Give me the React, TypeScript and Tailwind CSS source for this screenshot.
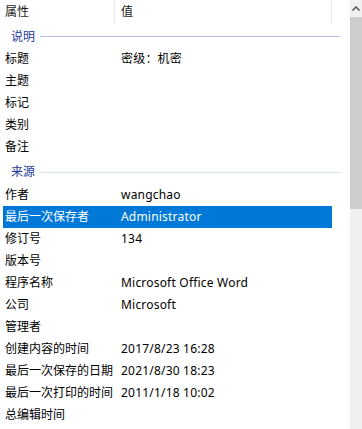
const font = { fontFamily: "'Noto Sans', 'Noto Sans CJK SC', sans-serif" }

type Row = { label: string; value?: string; selected?: boolean }

const desc: Row[] = [
  { label: '标题', value: '密级：机密' },
  { label: '主题' },
  { label: '标记' },
  { label: '类别' },
  { label: '备注' },
]

const origin: Row[] = [
  { label: '作者', value: 'wangchao' },
  { label: '最后一次保存者', value: 'Administrator', selected: true },
  { label: '修订号', value: '134' },
  { label: '版本号' },
  { label: '程序名称', value: 'Microsoft Office Word' },
  { label: '公司', value: 'Microsoft' },
  { label: '管理者' },
  { label: '创建内容的时间', value: '2017/8/23 16:28' },
  { label: '最后一次保存的日期', value: '2021/8/30 18:23' },
  { label: '最后一次打印的时间', value: '2011/1/18 10:02' },
  { label: '总编辑时间' },
]

function PropRow({ row }: { row: Row }) {
  return (
    <div
      className={`flex h-[22px] items-center ml-[3px] w-[329px] ${row.selected ? 'bg-[#0078d7] text-white' : 'text-black'}`}
    >
      <div className="w-[118px] pl-[2px] whitespace-nowrap">{row.label}</div>
      <div className="whitespace-nowrap tracking-[0.2px]">{row.value}</div>
    </div>
  )
}

function Group({ title, faded, className }: { title: string; faded?: boolean; className: string }) {
  return (
    <div className={`flex items-center ${className}`}>
      <span className="pl-[11px] pr-[5px] text-[#1c3a9c]">{title}</span>
      <div className={`h-px w-[300px] ${faded ? 'bg-[#dbe3f1]' : 'bg-[#b3c0e6]'}`} />
    </div>
  )
}

export default function App() {
  return (
    <div className="flex h-[429px] w-[362px] bg-white text-[12px] overflow-hidden" style={font}>
      <div className="flex-1">
        <div className="flex h-[24px]">
          <div className="w-[115px] border-r border-[#e5e5e5] pl-[5px] pt-[3px] text-[#1a1a1a]">属性</div>
          <div className="w-[217px] border-r border-[#e5e5e5] pl-[6px] pt-[3px] text-[#1a1a1a]">值</div>
        </div>
        <Group title="说明" className="h-[24px] pt-[1px]" />
        {desc.map((r) => (
          <PropRow key={r.label} row={r} />
        ))}
        <Group title="来源" faded className="h-[26px] pt-[2px]" />
        {origin.map((r) => (
          <PropRow key={r.label} row={r} />
        ))}
      </div>
      <div className="flex w-[12px] flex-col bg-[#f0f0f0]">
        <div className="flex h-[17px] items-center justify-center">
          <svg width="8" height="5" viewBox="0 0 8 5">
            <path d="M0.5 4.5 L4 1 L7.5 4.5" fill="none" stroke="#606060" strokeWidth="1.6" />
          </svg>
        </div>
        <div className="h-[192px] bg-[#cdcdcd]" />
      </div>
    </div>
  )
}
